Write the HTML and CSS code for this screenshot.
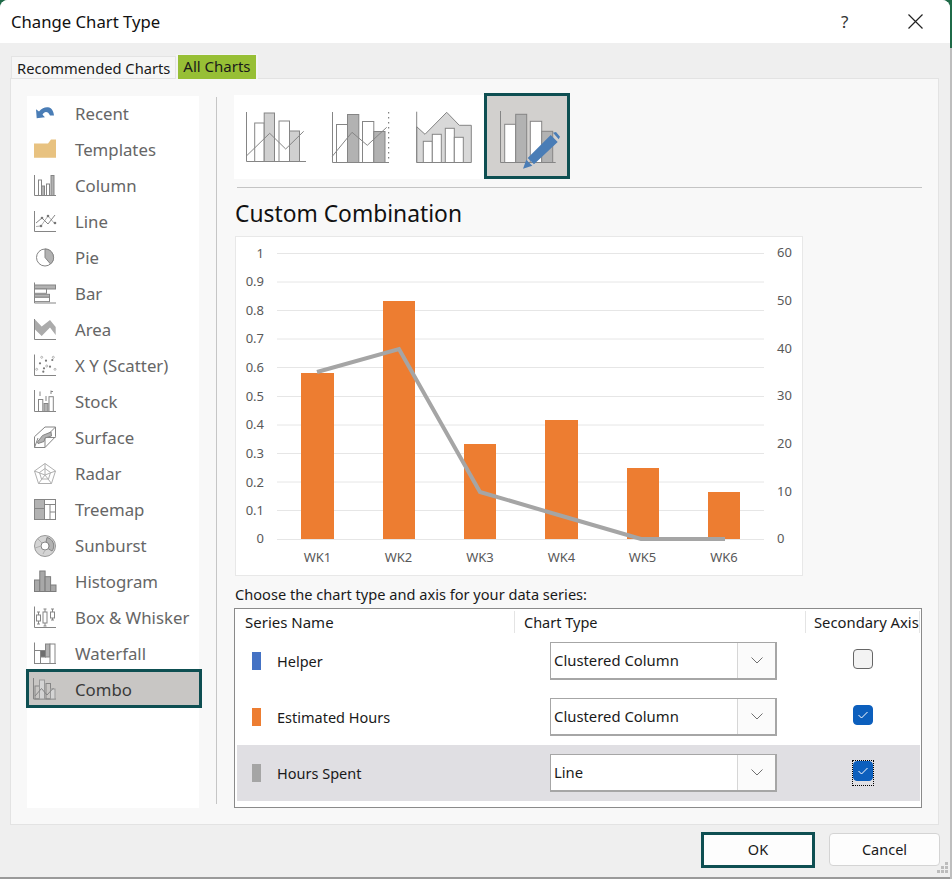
FILE: index.html
```html
<!DOCTYPE html>
<html lang="en">
<head>
    <meta charset="UTF-8">
    <meta name="viewport" content="width=device-width, initial-scale=1.0">
    <title>Change Chart Type</title>
    <link rel="stylesheet" href="styles.css">
</head>
<body>
    <div class="window">
        <div class="titlebar">
            <div class="title">Change Chart Type</div>
            <div class="help">?</div>
            <svg class="close" width="15" height="15" viewBox="0 0 15 15"><path d="M.5 .5 14.500 14.500M14.500 .5 .5 14.500"/></svg>
        </div>

        <div class="tabs">
            <div class="tab">Recommended Charts</div>
            <div class="tab tab-active">All Charts</div>
        </div>

        <div class="panel">
            <ul class="type-list">
                <li class="type-item">
                    <svg class="ico" viewBox="0 0 24 24"><path class="blue" d="M3 7.300 6 9.500C9 6 12 5 15 5.300 18.500 5.500 20.500 9 21 13.500L17 13.500C16 11 14.500 10 13 10 11.500 10 10.500 11 9.500 12.800L12 15.300 3.700 16.300Z"/></svg>
                    <span>Recent</span>
                </li>
                <li class="type-item">
                    <svg class="ico" viewBox="0 0 24 24"><path class="folder" d="M1 5.500H15L18 1.500H23V19.700H1Z"/></svg>
                    <span>Templates</span>
                </li>
                <li class="type-item">
                    <svg class="ico" viewBox="0 0 24 24"><path d="M1.500 1V21.500H23"/><rect x="5.500" y="6" width="3" height="15.500"/><rect class="fill" x="8.500" y="12" width="3" height="9.500"/><rect x="13.500" y="10" width="3" height="11.500"/><rect class="fill" x="18" y="1.500" width="3" height="20"/></svg>
                    <span>Column</span>
                </li>
                <li class="type-item">
                    <svg class="ico" viewBox="0 0 24 24"><path d="M1.500 1V21.500H23"/><path class="light" d="M3 16.500 8 16 15 6 22 14"/><path d="M3 13 9 8 15 14 22 5"/><circle class="dot" cx="9" cy="8" r="1.300"/><circle class="dot" cx="22" cy="13" r="1.300"/><circle class="dot" cx="8" cy="16" r="1.300"/><circle class="dot" cx="15" cy="6" r="1.300"/></svg>
                    <span>Line</span>
                </li>
                <li class="type-item">
                    <svg class="ico" viewBox="0 0 24 24"><circle cx="12" cy="11.500" r="8.500"/><path class="fill" d="M12 11.500V3A8.500 8.500 0 0 1 17.500 18Z"/></svg>
                    <span>Pie</span>
                </li>
                <li class="type-item">
                    <svg class="ico" viewBox="0 0 24 24"><path d="M1.500 .5V21H23"/><rect class="fill" x="1.500" y="3" width="21" height="4"/><rect x="1.500" y="7" width="12" height="4.300"/><rect class="fill" x="1.500" y="12.300" width="15" height="3"/><rect x="1.500" y="15.300" width="15" height="4.300"/></svg>
                    <span>Bar</span>
                </li>
                <li class="type-item">
                    <svg class="ico" viewBox="0 0 24 24"><path class="solid" d="M1.500 1 8.700 8.500 17 2 22.700 9V17L17 9.500 8.700 18 1.500 11Z"/><path d="M1.500 1V21.500H23"/></svg>
                    <span>Area</span>
                </li>
                <li class="type-item">
                    <svg class="ico" viewBox="0 0 24 24"><path d="M1.500 .5V21.500H23"/><circle class="dot" cx="7" cy="9.300" r="1.100"/><circle class="dot" cx="13" cy="6.700" r="1.100"/><circle class="dot" cx="19.300" cy="6" r="1.100"/><circle class="dot" cx="11" cy="14.300" r="1.100"/><circle class="dot" cx="17" cy="12.700" r="1.100"/><circle class="dot" cx="10.300" cy="17.700" r="1.100"/><circle class="thin" cx="8.700" cy="3.300" r="1"/><circle class="thin" cx="20.300" cy="3.300" r="1"/><circle class="thin" cx="3.700" cy="15.300" r="1"/><circle class="thin" cx="13.700" cy="12" r="1"/><circle class="thin" cx="22" cy="15.300" r="1"/></svg>
                    <span>X Y (Scatter)</span>
                </li>
                <li class="type-item">
                    <svg class="ico" viewBox="0 0 24 24"><path d="M1.500 0V21.500H23"/><rect x="5.500" y="9.500" width="4.300" height="12"/><rect class="fill" x="11" y="13.500" width="4" height="8"/><rect x="16" y="6.700" width="4.300" height="14.800"/><path d="M7 1.500V6M13 6V11M18 .5V4M18 1.500H20"/></svg>
                    <span>Stock</span>
                </li>
                <li class="type-item">
                    <svg class="ico" viewBox="0 0 24 24"><path d="M1.500 10.700 12 1H22.500V10.700L12 21.500H1.500ZM1.500 21.500 5 12M12 21.500V11.500H22.500M12 11.500 22.500 1"/><path class="fill" d="M4.500 16 9.500 9.500 18 6 18.500 10 12 12 11 15.500 5 17.500Z"/></svg>
                    <span>Surface</span>
                </li>
                <li class="type-item">
                    <svg class="ico" viewBox="0 0 24 24"><path class="light" d="M12 1.500 22.500 9 18.500 21.500H5.500L1.500 9ZM12 6.500 17.500 10.500 15.500 17H8.500L6.500 10.500ZM12 1.500V13M22.500 9 12 13M18.500 21.500 12 13M5.500 21.500 12 13M1.500 9 12 13"/></svg>
                    <span>Radar</span>
                </li>
                <li class="type-item">
                    <svg class="ico" viewBox="0 0 24 24"><rect class="fill" x="1.500" y="1.500" width="10" height="9"/><rect class="fill" x="1.500" y="10.500" width="10" height="11"/><rect class="none" x="1.500" y="1.500" width="21" height="20"/><path d="M11.500 6.500H22.500M17 6.500V21.500M17 14H22.500"/></svg>
                    <span>Treemap</span>
                </li>
                <li class="type-item">
                    <svg class="ico" viewBox="0 0 24 24"><circle class="lightfill" cx="12" cy="12" r="10.500"/><path class="fill" d="M14 3.500A8.500 8.500 0 0 1 19 17L15 14.500A4 4 0 0 0 13 8Z"/><circle cx="12" cy="12" r="4"/><path class="light" d="M12 16 10 20M8 12 2 14M9 9 5 5"/></svg>
                    <span>Sunburst</span>
                </li>
                <li class="type-item">
                    <svg class="ico" viewBox="0 0 24 24"><rect class="solid-line" x="1.500" y="10" width="5.300" height="11.500"/><rect class="solid-line" x="6.800" y="1" width="5.300" height="20.500"/><rect class="solid-line" x="12.100" y="6.700" width="5.500" height="14.800"/><rect class="solid-line" x="17.600" y="15" width="5.400" height="6.500"/></svg>
                    <span>Histogram</span>
                </li>
                <li class="type-item">
                    <svg class="ico" viewBox="0 0 24 24"><path d="M1.500 .5V21.500H23M5.500 6V18M12 3V20M19.500 3V14M4 6H7M10.500 3H13.500M18 3H21M4 18H7M10.500 20H13.500M18 14H21"/><rect x="3.500" y="9" width="4" height="6"/><rect x="10" y="6" width="4" height="11"/><rect x="17.500" y="6" width="4" height="6"/></svg>
                    <span>Box &amp; Whisker</span>
                </li>
                <li class="type-item">
                    <svg class="ico" viewBox="0 0 24 24"><path d="M1.500 .5V21.500H23"/><rect x="1.500" y="8.500" width="6" height="13"/><rect class="dark" x="7.500" y="8.500" width="5" height="6.500"/><rect class="fill" x="12.500" y="2" width="4.500" height="13"/><rect x="17" y="2" width="5" height="19.500"/></svg>
                    <span>Waterfall</span>
                </li>
                <li class="type-item type-item-active">
                    <svg class="ico" viewBox="0 0 24 24"><path d="M.5 0V21H23"/><rect x="2" y="8" width="4.500" height="13"/><rect class="lightfill" x="6.500" y="2" width="5" height="19"/><rect x="13" y="5.500" width="4.500" height="15.500"/><rect class="lightfill" x="17.500" y="11" width="4.500" height="10"/><path d="M2 18 8.500 10.500 14 17 20.500 10"/></svg>
                    <span>Combo</span>
                </li>
            </ul>

            <div class="divider"></div>

            <div class="content">
                <div class="thumbs">
                    <div class="thumb">
                        <svg width="84" height="84" viewBox="0 0 84 84">
                            <path d="M12.500 17V66.500H72"/>
                            <rect x="20.700" y="28" width="9.500" height="38.500"/>
                            <rect class="lightfill" x="30.200" y="18" width="10.300" height="48.500"/>
                            <rect x="45" y="26" width="10.500" height="40.500"/>
                            <rect class="lightfill" x="55.500" y="36" width="10" height="30.500"/>
                            <path d="M12.700 60.700 35.700 38.300 51.700 54 69.700 36.300"/>
                        </svg>
                    </div>
                    <div class="thumb">
                        <svg width="84" height="84" viewBox="0 0 84 84">
                            <path d="M14.500 17V67.500H71"/>
                            <rect x="18.500" y="29.500" width="11" height="38"/>
                            <rect class="fill" x="29.500" y="19.500" width="11.300" height="48"/>
                            <rect x="44.500" y="26.500" width="11.300" height="41"/>
                            <rect class="fill" x="55.800" y="36.500" width="11.200" height="31"/>
                            <path class="dotted" d="M70.700 17V67"/>
                            <path d="M14.300 61.300 34 37.300 49.300 50.300 68.700 32.300"/>
                        </svg>
                    </div>
                    <div class="thumb">
                        <svg width="82" height="84" viewBox="0 0 82 84">
                            <path class="arealine" d="M14.700 31.700 23 39.300 44.700 17.300 57.300 30.300H69.300V67.500H14.700Z"/>
                            <path d="M14.700 16.700V67.500"/>
                            <rect x="21.300" y="46.300" width="9" height="21.200"/>
                            <rect x="30.300" y="39.300" width="9" height="28.200"/>
                            <rect x="43.300" y="33.300" width="9" height="34.200"/>
                            <rect x="52.300" y="42.300" width="9" height="25.200"/>
                        </svg>
                    </div>
                    <div class="thumb thumb-active">
                        <svg width="80" height="80" viewBox="3 3 80 80">
                            <path d="M16.500 18V69.500H71.700"/>
                            <rect x="20.700" y="31.300" width="11" height="38.200"/>
                            <rect class="fill" x="31.700" y="21.300" width="11" height="48.200"/>
                            <rect x="46.300" y="28.300" width="11.400" height="41.200"/>
                            <rect class="fill" x="57.700" y="38.300" width="11" height="31.200"/>
                            <path class="blue" d="M39 75.700 48.300 72.700 42.300 66.700ZM43.700 65 66.700 42 73.700 49 50 71.300ZM69 39.700 72 39 76 43.700 74.700 46.300Z"/>
                        </svg>
                    </div>
                </div>
                <div class="rule"></div>

                <h2 class="heading">Custom Combination</h2>

                <div class="chart">
                    <svg width="566" height="338" viewBox="236 237 566 338">
                        <g class="grid">
                            <path d="M277 253.500H764M277 282H764M277 310.500H764M277 339H764M277 367.500H764M277 396.500H764M277 425H764M277 453.500H764M277 482H764M277 510.500H764M277 539.500H764"/>
                        </g>
                        <g class="bars">
                            <rect x="301" y="373" width="33" height="166"/>
                            <rect x="383" y="301" width="32" height="238"/>
                            <rect x="464" y="444" width="32" height="95"/>
                            <rect x="545" y="420" width="33" height="119"/>
                            <rect x="627" y="468" width="32" height="71"/>
                            <rect x="708" y="492" width="32" height="47"/>
                        </g>
                        <polyline class="series" points="317,372 399,349 480,492 562,516 641,539 725,539"/>
                        <g class="axis-left">
                            <text x="264" y="258">1</text>
                            <text x="264" y="286">0.9</text>
                            <text x="264" y="315">0.8</text>
                            <text x="264" y="343">0.7</text>
                            <text x="264" y="372">0.6</text>
                            <text x="264" y="401">0.5</text>
                            <text x="264" y="429">0.4</text>
                            <text x="264" y="458">0.3</text>
                            <text x="264" y="487">0.2</text>
                            <text x="264" y="515">0.1</text>
                            <text x="264" y="543">0</text>
                        </g>
                        <g class="axis-right">
                            <text x="777" y="257">60</text>
                            <text x="777" y="305">50</text>
                            <text x="777" y="353">40</text>
                            <text x="777" y="400">30</text>
                            <text x="777" y="448">20</text>
                            <text x="777" y="496">10</text>
                            <text x="777" y="543">0</text>
                        </g>
                        <g class="axis-bottom">
                            <text x="317.500" y="562">WK1</text>
                            <text x="398.500" y="562">WK2</text>
                            <text x="480" y="562">WK3</text>
                            <text x="561.500" y="562">WK4</text>
                            <text x="642.500" y="562">WK5</text>
                            <text x="724" y="562">WK6</text>
                        </g>
                    </svg>
                </div>

                <div class="series-label">Choose the chart type and axis for your data series:</div>

                <div class="series-table">
                    <div class="series-head">
                        <div class="col-name">Series Name</div>
                        <div class="col-type">Chart Type</div>
                        <div class="col-axis">Secondary Axis</div>
                    </div>
                    <div class="series-row">
                        <div class="col-name"><span class="swatch swatch-blue"></span>Helper</div>
                        <div class="col-type">
                            <div class="combo"><span class="combo-text">Clustered Column</span><span class="combo-btn"><svg width="12" height="7" viewBox="0 0 12 7"><path d="M.5 .5 6 6 11.500 .5"/></svg></span></div>
                        </div>
                        <div class="col-axis"><span class="check"></span></div>
                    </div>
                    <div class="series-row">
                        <div class="col-name"><span class="swatch swatch-orange"></span>Estimated Hours</div>
                        <div class="col-type">
                            <div class="combo"><span class="combo-text">Clustered Column</span><span class="combo-btn"><svg width="12" height="7" viewBox="0 0 12 7"><path d="M.5 .5 6 6 11.500 .5"/></svg></span></div>
                        </div>
                        <div class="col-axis"><span class="check check-on"><svg width="10" height="8" viewBox="0 0 10 8"><path d="M.5 4 3.500 7 9.500 1"/></svg></span></div>
                    </div>
                    <div class="series-row series-row-active">
                        <div class="col-name"><span class="swatch swatch-gray"></span>Hours Spent</div>
                        <div class="col-type">
                            <div class="combo"><span class="combo-text">Line</span><span class="combo-btn"><svg width="12" height="7" viewBox="0 0 12 7"><path d="M.5 .5 6 6 11.500 .5"/></svg></span></div>
                        </div>
                        <div class="col-axis"><span class="check check-on check-focus"><svg width="10" height="8" viewBox="0 0 10 8"><path d="M.5 4 3.500 7 9.500 1"/></svg></span></div>
                    </div>
                </div>
            </div>
        </div>

        <div class="footer">
            <button class="btn btn-default">OK</button>
            <button class="btn">Cancel</button>
        </div>

        <svg class="grip" width="14" height="14" viewBox="0 0 14 14">
            <rect x="9" y="0" width="3" height="3"/>
            <rect x="5" y="4" width="3" height="3"/>
            <rect x="9" y="4" width="3" height="3"/>
            <rect x="1" y="8" width="3" height="3"/>
            <rect x="5" y="8" width="3" height="3"/>
            <rect x="9" y="8" width="3" height="3"/>
        </svg>
    </div>
</body>
</html>
```

FILE: styles.css
```css
* {
    box-sizing: border-box;
}

html, body {
    margin: 0;
    height: 100%;
}

body {
    font-family: 'Noto Sans', 'Open Sans', sans-serif;
    font-size: 14.5px;
    color: #1a1a1a;
    background: linear-gradient(#1f6a48 0, #1f6a48 48px, #bdbdbd 48px, #bdbdbd 879px, #fff 879px);
    overflow: hidden;
}

.window {
    position: relative;
    width: 950px;
    height: 879px;
    background: #efefef;
    border-radius: 8px 8px 0 0;
    border-bottom: 2px solid #9a9a9a;
    overflow: hidden;
}

/* title bar */
.titlebar {
    height: 43px;
    background: #fff;
    display: flex;
    align-items: center;
    padding-left: 11px;
}

.title {
    font-size: 16.7px;
    flex: 1;
    color: #111;
}

.help {
    font-size: 17px;
    width: 67px;
    color: #333;
}

.close {
    margin-right: 27px;
    fill: none;
    stroke: #222;
    stroke-width: 1.2;
}

/* tabs */
.tabs {
    height: 35px;
    padding: 12px 0 0 11px;
    display: flex;
    align-items: flex-end;
    font-size: 14.7px;
}

.tab {
    height: 22px;
    padding: 0 5px;
    line-height: 22px;
    border: 1px solid #e4e4e4;
    border-bottom: none;
    background: #f6f6f6;
}

.tab-active {
    position: relative;
    height: 25px;
    margin-bottom: -1px;
    padding: 0 5px;
    line-height: 22px;
    font-size: 15px;
    background: #97bf35;
    border: 2px solid #f4f4f4;
    border-top-width: 1px;
    border-bottom: none;
}

/* main panel */
.panel {
    height: 747px;
    margin-left: 10px;
    width: 929px;
    background: #f8f8f8;
    border: 1px solid #e3e3e3;
    display: flex;
    padding: 17px 0 0 16px;
}

.type-list {
    list-style: none;
    margin: 0;
    padding: 0;
    width: 172px;
    height: 712px;
    background: #fff;
    flex-shrink: 0;
}

.type-item {
    height: 36px;
    display: flex;
    align-items: center;
    padding-left: 6px;
    color: #666;
    font-size: 16.8px;
}

.type-item span {
    margin-top: -2px;
}

.type-item-active {
    height: 39px;
    margin: -3px -3px 0 -1px;
    padding: 3px 0 0 4px;
    background: #c8c6c4;
    border: 3px solid #0e4f52;
    color: #3a3a3a;
}

.ico {
    width: 24px;
    height: 24px;
    margin-right: 18px;
    flex-shrink: 0;
}

.ico path, .ico rect, .ico circle, .thumb path, .thumb rect {
    fill: none;
    stroke: #858585;
    stroke-width: 1;
}

.thumb rect, .ico rect, .ico circle {
    fill: #fff;
}

.type-item-active .ico rect {
    fill: none;
}

.ico rect.fill, .ico path.fill, .thumb rect.fill {
    fill: #b2b2b2;
}

.thumb rect.lightfill {
    fill: #d0d0d0;
}

.ico rect.lightfill, .ico circle.lightfill {
    fill: #d4d4d4;
    stroke: #999;
}

.ico rect.none {
    fill: none;
}

.ico rect.dark {
    fill: #6e6e6e;
}

.ico path.solid {
    fill: #ababab;
    stroke: none;
}

.ico rect.solid-line {
    fill: #a8a8a8;
    stroke: #7c7c7c;
}

.ico path.light {
    stroke: #b0b0b0;
}

.ico circle.dot {
    fill: #777;
    stroke: none;
}

.ico circle.thin {
    fill: #fff;
    stroke: #999;
    stroke-width: .7;
}

.ico path.blue, .thumb path.blue {
    fill: #4a7db6;
    stroke: none;
}

.ico path.folder {
    fill: #e8c280;
    stroke: none;
}

.thumb path.dotted {
    stroke-dasharray: 1.500 3.500;
    stroke: #666;
}

.thumb path.arealine {
    fill: #d8d8d8;
}

.divider {
    width: 1px;
    height: 707px;
    margin: 1px 0 0 17px;
    background: #c6c6c6;
    flex-shrink: 0;
}

.content {
    width: 690px;
    margin: -1px 0 0 17px;
}

/* thumbnails */
.thumbs {
    display: flex;
    height: 84px;
    background: #fff;
    width: 250px;
    margin-bottom: 8px;
}

.thumb {
    height: 84px;
    flex-shrink: 0;
}

.thumb-active {
    width: 86px;
    height: 86px;
    margin-top: -2px;
    border: 3px solid #0e4f52;
    background: #d2d0ce;
}

.thumb svg {
    display: block;
}

.rule {
    height: 1px;
    width: 685px;
    margin-left: 3px;
    background: #c4c4c4;
}

.heading {
    margin: 0 0 0 1px;
    height: 48px;
    line-height: 52px;
    font-size: 22.8px;
    font-weight: 400;
    color: #111;
}

.chart {
    width: 568px;
    height: 340px;
    margin-left: 1px;
    background: #fff;
    border: 1px solid #e8e8e8;
}

.chart svg {
    display: block;
}

.grid path {
    fill: none;
    stroke: #e6e6e6;
    stroke-width: 1;
}

.bars rect {
    fill: #ed7d31;
}

.series {
    fill: none;
    stroke: #a5a5a5;
    stroke-width: 4;
}

.chart text {
    font-family: 'Noto Sans', sans-serif;
    font-size: 13px;
    fill: #595959;
}

.axis-left text {
    text-anchor: end;
}

.axis-bottom text {
    text-anchor: middle;
}

/* series table */
.series-label {
    height: 32px;
    line-height: 36px;
    margin-left: 1px;
    font-size: 14.6px;
}

.series-table {
    width: 688px;
    height: 200px;
    background: #fff;
    border: 1px solid #8a8a8a;
    padding-left: 2px;
}

.series-head {
    display: flex;
    height: 24px;
    line-height: 26px;
}

.series-head .col-name {
    padding-left: 8px;
    height: 26px;
    font-size: 15px;
}

.series-head .col-type, .series-head .col-axis {
    border-left: 1px solid #e4e4e4;
    padding-left: 9px;
    height: 22px;
    margin-top: 2px;
    line-height: 22px;
}

.series-head .col-axis {
    border-right: 1px solid #e4e4e4;
    padding-left: 8px;
    white-space: nowrap;
    font-size: 14.8px;
}

.col-name {
    width: 277px;
    display: flex;
    align-items: center;
    flex-shrink: 0;
}

.col-type {
    width: 291px;
    flex-shrink: 0;
}

.col-axis {
    width: 115px;
    flex-shrink: 0;
}

.series-row {
    display: flex;
    height: 56px;
    align-items: center;
    width: 683px;
}

.series-row .col-name {
    padding-left: 15px;
}

.series-row .col-type {
    padding-left: 36px;
}

.series-row .col-axis {
    padding-left: 48px;
    display: flex;
}

.series-row-active {
    background: #e0dfe3;
}

.swatch {
    width: 9px;
    height: 18px;
    margin-right: 16px;
}

.swatch-blue {
    background: #4472c4;
}

.swatch-orange {
    background: #ed7d31;
}

.swatch-gray {
    background: #a5a5a5;
}

.combo {
    width: 227px;
    height: 38px;
    display: flex;
    background: #fff;
    border: 1px solid #a6a6a6;
    border-width: 1px 2px 2px 1px;
    font-size: 14.85px;
}

.combo-text {
    flex: 1;
    line-height: 34px;
    padding-left: 3px;
}

.combo-btn {
    width: 38px;
    background: #fbfbfb;
    border-left: 1px solid #d6d6d6;
    display: flex;
    align-items: center;
    justify-content: center;
}

.combo-btn path {
    fill: none;
    stroke: #707070;
}

.check {
    position: relative;
    width: 20px;
    height: 20px;
    margin-top: -4px;
    border-radius: 4px;
    border: 1px solid #666;
    background: #f3f3f3;
    display: flex;
    align-items: center;
    justify-content: center;
}

.check-on {
    background: #0c5fbd;
    border-color: #0c5fbd;
}

/* dotted focus box hangs lower than the checkbox */
.check-focus::after {
    content: "";
    position: absolute;
    top: -2px;
    left: -2px;
    right: -2px;
    bottom: -6px;
    border: 1px dotted #000;
}

.check path {
    fill: none;
    stroke: #fff;
}

/* footer */
.footer {
    display: flex;
    justify-content: flex-end;
    padding: 7px 10px 0 0;
    gap: 14px;
    align-items: flex-start;
}

.btn {
    width: 111px;
    height: 33px;
    margin-top: 1px;
    padding: 0 0 2px;
    font: inherit;
    color: #1a1a1a;
    background: #fdfdfd;
    border: 1px solid #d4d4d4;
    border-radius: 4px;
}

.btn-default {
    width: 114px;
    height: 36px;
    margin-top: 0;
    border: 3px solid #0e4f52;
    border-radius: 0;
}

.grip {
    position: absolute;
    right: 0;
    bottom: 1px;
    fill: #bcbcbc;
}
```
